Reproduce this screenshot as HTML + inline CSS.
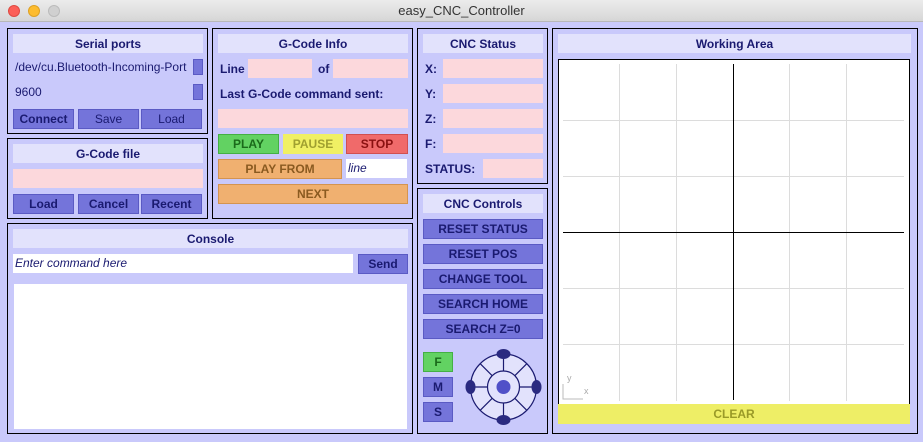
<!DOCTYPE html>
<html><head><meta charset="utf-8"><style>
*{box-sizing:border-box;margin:0;padding:0}
body{width:923px;height:442px;background:#c9c9fb;font-family:"Liberation Sans",sans-serif;position:relative;overflow:hidden;color:#1a1a70}
.a{position:absolute}
.tb{left:0;top:0;width:923px;height:22px;background:linear-gradient(#ececec,#d6d6d6);border-bottom:1px solid #b8b8b8;text-align:center;font-size:13px;line-height:22px;color:#333}
.dot{position:absolute;top:5px;width:12px;height:12px;border-radius:50%}
.p{position:absolute;border:1px solid #000}
.h{position:absolute;background:#e2e2fc;font-weight:bold;font-size:12px;text-align:center;line-height:20px;height:19px}
.b{position:absolute;background:#7474da;border:1px solid #5a5ac4;font-size:12px;text-align:center;line-height:18px;height:20px;font-weight:bold;color:#1a1a70}
.pk{position:absolute;background:#fcd8dc;height:19px}
.w{position:absolute;background:#fff}
.t{position:absolute;font-size:12px;font-weight:bold}
</style></head><body>
<div class="a tb">easy_CNC_Controller
<div class="dot" style="left:8px;background:#fc5f57;border:1px solid #de4a42"></div>
<div class="dot" style="left:28px;background:#fdbc2e;border:1px solid #dea123"></div>
<div class="dot" style="left:48px;background:#d0d0d0;border:1px solid #bbb"></div>
</div>

<div class="p" style="left:7px;top:28px;width:201px;height:106px"></div>
<div class="h" style="left:13px;top:34px;width:190px">Serial ports</div>
<div class="t" style="left:15px;top:60px;font-weight:normal">/dev/cu.Bluetooth-Incoming-Port</div>
<div class="a" style="left:193px;top:59px;width:10px;height:16px;background:#7474da;border:1px solid #5a5ac4"></div>
<div class="t" style="left:15px;top:85px;font-weight:normal">9600</div>
<div class="a" style="left:193px;top:84px;width:10px;height:16px;background:#7474da;border:1px solid #5a5ac4"></div>
<div class="b" style="left:13px;top:109px;width:61px">Connect</div>
<div class="b" style="left:78px;top:109px;width:61px;font-weight:normal">Save</div>
<div class="b" style="left:141px;top:109px;width:61px;font-weight:normal">Load</div>

<div class="p" style="left:7px;top:138px;width:201px;height:81px"></div>
<div class="h" style="left:13px;top:144px;width:190px">G-Code file</div>
<div class="pk" style="left:13px;top:169px;width:190px"></div>
<div class="b" style="left:13px;top:194px;width:61px">Load</div>
<div class="b" style="left:78px;top:194px;width:61px">Cancel</div>
<div class="b" style="left:141px;top:194px;width:61px">Recent</div>

<div class="p" style="left:7px;top:223px;width:406px;height:211px"></div>
<div class="h" style="left:13px;top:229px;width:395px">Console</div>
<div class="w" style="left:13px;top:254px;width:340px;height:19px;font-size:12px;font-style:italic;line-height:19px;padding-left:2px">Enter command here</div>
<div class="b" style="left:358px;top:254px;width:50px">Send</div>
<div class="w" style="left:14px;top:284px;width:393px;height:145px"></div>

<div class="p" style="left:212px;top:28px;width:201px;height:191px"></div>
<div class="h" style="left:218px;top:34px;width:190px">G-Code Info</div>
<div class="t" style="left:220px;top:62px">Line</div>
<div class="pk" style="left:248px;top:59px;width:64px"></div>
<div class="t" style="left:318px;top:62px">of</div>
<div class="pk" style="left:333px;top:59px;width:75px"></div>
<div class="t" style="left:220px;top:87px">Last G-Code command sent:</div>
<div class="pk" style="left:218px;top:109px;width:190px"></div>
<div class="b" style="left:218px;top:134px;width:61px;background:#62d262;border-color:#44b044;color:#1a6a1a">PLAY</div>
<div class="b" style="left:283px;top:134px;width:60px;background:#f0f064;border-color:#f0f064;color:#a0a030">PAUSE</div>
<div class="b" style="left:346px;top:134px;width:62px;background:#f06a6a;border-color:#d05050;color:#8a1010">STOP</div>
<div class="b" style="left:218px;top:159px;width:124px;background:#f0b070;border-color:#d49450;color:#8a5a20">PLAY FROM</div>
<div class="w" style="left:346px;top:159px;width:61px;height:19px;font-size:12px;font-style:italic;line-height:19px;padding-left:2px">line</div>
<div class="b" style="left:218px;top:184px;width:190px;background:#f0b070;border-color:#d49450;color:#8a5a20">NEXT</div>

<div class="p" style="left:417px;top:28px;width:131px;height:156px"></div>
<div class="h" style="left:423px;top:34px;width:120px">CNC Status</div>
<div class="t" style="left:425px;top:62px">X:</div><div class="pk" style="left:443px;top:59px;width:100px"></div>
<div class="t" style="left:425px;top:87px">Y:</div><div class="pk" style="left:443px;top:84px;width:100px"></div>
<div class="t" style="left:425px;top:112px">Z:</div><div class="pk" style="left:443px;top:109px;width:100px"></div>
<div class="t" style="left:425px;top:137px">F:</div><div class="pk" style="left:443px;top:134px;width:100px"></div>
<div class="t" style="left:425px;top:162px">STATUS:</div><div class="pk" style="left:483px;top:159px;width:60px"></div>

<div class="p" style="left:417px;top:188px;width:131px;height:246px"></div>
<div class="h" style="left:423px;top:194px;width:120px">CNC Controls</div>
<div class="b" style="left:423px;top:219px;width:120px">RESET STATUS</div>
<div class="b" style="left:423px;top:244px;width:120px">RESET POS</div>
<div class="b" style="left:423px;top:269px;width:120px">CHANGE TOOL</div>
<div class="b" style="left:423px;top:294px;width:120px">SEARCH HOME</div>
<div class="b" style="left:423px;top:319px;width:120px">SEARCH Z=0</div>
<div class="b" style="left:423px;top:352px;width:30px;background:#62d262;border-color:#44b044;color:#1a6a1a">F</div>
<div class="b" style="left:423px;top:377px;width:30px">M</div>
<div class="b" style="left:423px;top:402px;width:30px">S</div>
<svg class="a" style="left:462px;top:344px" width="84" height="86" viewBox="462 344 84 86">
<circle cx="503.5" cy="387" r="33" fill="#e2e2fc" stroke="#1a1a70" stroke-width="1.2"/>
<g stroke="#1a1a70" stroke-width="1.2">
<line x1="503.5" y1="354" x2="503.5" y2="420"/><line x1="470.5" y1="387" x2="536.5" y2="387"/>
<line x1="480.2" y1="363.7" x2="526.8" y2="410.3"/><line x1="526.8" y1="363.7" x2="480.2" y2="410.3"/>
</g>
<circle cx="503.5" cy="387" r="16" fill="#e2e2fc" stroke="#1a1a70" stroke-width="1.2"/>
<circle cx="503.5" cy="387" r="7" fill="#5050c8"/>
<ellipse cx="503.5" cy="354" rx="7" ry="5" fill="#2a2a80"/>
<ellipse cx="503.5" cy="420" rx="7" ry="5" fill="#2a2a80"/>
<ellipse cx="470.5" cy="387" rx="5" ry="7" fill="#2a2a80"/>
<ellipse cx="536.5" cy="387" rx="5" ry="7" fill="#2a2a80"/>
</svg>

<div class="p" style="left:552px;top:28px;width:366px;height:406px"></div>
<div class="h" style="left:558px;top:34px;width:353px">Working Area</div>
<svg class="a" style="left:558px;top:59px" width="352" height="346" viewBox="558 59 352 346">
<rect x="558.5" y="59.5" width="351" height="346" fill="#fff" stroke="#000"/>
<g stroke="#dcdcdc">
<line x1="619.5" y1="64" x2="619.5" y2="401"/><line x1="676.5" y1="64" x2="676.5" y2="401"/>
<line x1="789.5" y1="64" x2="789.5" y2="401"/><line x1="846.5" y1="64" x2="846.5" y2="401"/>
<line x1="563" y1="120.5" x2="904" y2="120.5"/><line x1="563" y1="176.5" x2="904" y2="176.5"/>
<line x1="563" y1="288.5" x2="904" y2="288.5"/><line x1="563" y1="344.5" x2="904" y2="344.5"/>
</g>
<line x1="733.5" y1="64" x2="733.5" y2="400" stroke="#000"/>
<line x1="563" y1="232.5" x2="904" y2="232.5" stroke="#000"/>
<g stroke="#bbb" fill="none"><path d="M563 384 V399 H583"/></g>
<text x="567" y="381" font-size="9" fill="#aaa" font-family="Liberation Sans">y</text>
<text x="584" y="394" font-size="9" fill="#aaa" font-family="Liberation Sans">x</text>
</svg>
<div class="b" style="left:558px;top:404px;width:352px;background:#eeee66;border-color:#eeee66;color:#9a9a28">CLEAR</div>
</body></html>
